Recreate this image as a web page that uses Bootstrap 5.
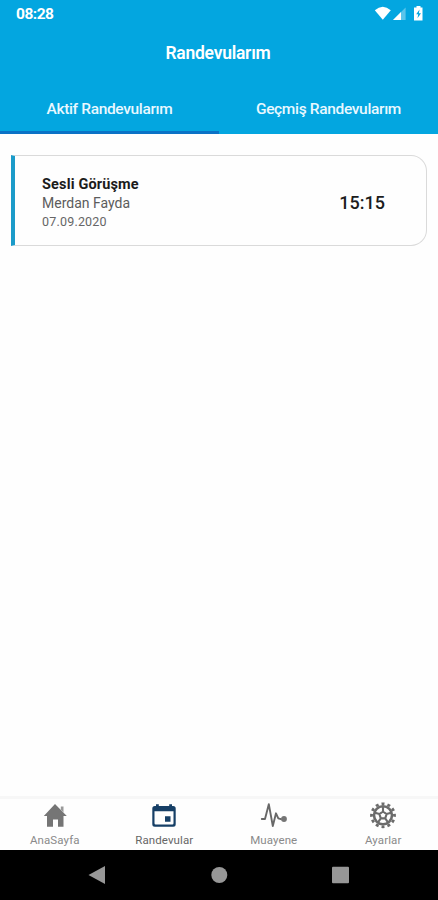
<!DOCTYPE html>
<html lang="tr">
<head>
<meta charset="utf-8">
<meta name="viewport" content="width=device-width, initial-scale=1">
<title>Randevularım</title>
<link href="https://cdn.jsdelivr.net/npm/bootstrap@5.3.0/dist/css/bootstrap.min.css" rel="stylesheet">
<style>
  body { font-family: Roboto, "Liberation Sans", sans-serif; height: 900px; overflow: hidden; background: #fefefe; }
  svg { display: block; flex: none; }
  .app-head { background: #03a6e0; height: 134px; }
  .status-bar { height: 28px; padding: 0 14px 0 16px; }
  .clock { font-size: 15.5px; line-height: 18px; letter-spacing: -.5px; }
  .app-title { font-size: 17.5px; line-height: 20px; height: 56px; padding: 15px 2px 0 0; margin: 0; font-weight: 600; letter-spacing: -.25px; }
  .app-tabs { height: 50px; }
  .app-tabs .nav-link { color: #e9f8ff; font-size: 15.5px; letter-spacing: -.34px; line-height: 20px; padding: 15px 0 0; border-bottom: 3px solid transparent; font-weight: 500; }
  .app-tabs .nav-link.active { border-bottom-color: #0b72c6; }
  .visit { margin: 21px 11px 0; height: 91px; border: 1px solid #dadada; border-left: 4px solid #1b9bc9; border-radius: 0 16px 16px 0; padding: 4px 41px 0 27px; background: #fefefe; }
  .visit-kind { font-size: 14.5px; letter-spacing: .15px; line-height: 19px; color: #1b1b1b; font-weight: 700; }
  .visit-name { font-size: 14px; line-height: 19px; color: #5c5c5c; }
  .visit-date { font-size: 12.5px; letter-spacing: .2px; line-height: 18px; color: #666; }
  .visit-time { font-size: 18px; line-height: 22px; color: #1c1c1c; font-weight: 500; }
  .app-nav { height: 54px; border-top: 3px solid #f7f7f7; background: #fefefe; }
  .app-nav .nav-link { padding: 2px 0 0; color: #8a8a8a; font-size: 11.5px; letter-spacing: .1px; line-height: 14px; }
  .app-nav .nav-link.active { color: #666; }
  .app-nav span { margin-top: 4px; }
  .sys-nav { height: 50px; background: #000; padding: 0 88px; }
</style>
</head>
<body class="d-flex flex-column">
<header class="app-head d-flex flex-column flex-shrink-0 text-white">
  <div class="status-bar d-flex justify-content-between align-items-center">
    <span class="clock fw-bold">08:28</span>
    <svg width="50" height="16" viewBox="0 0 50 16" fill="#fff">
      <path d="M.8 4.2Q8.7-2.8 16.8 4.2L8.800 13.800z"/>
      <path d="M19 13.900L31.600 1.500v12.400z" fill-opacity=".35"/>
      <path d="M19 13.900L27 6v7.900z"/>
      <path d="M42.500 0h4v1.600h2v12.800h-8.500V1.600h2.500z"/>
      <path d="M45.500 3.600l-3.300 4.700h2l-.7 4 3.500-5h-2.100z" fill="#03a6e0"/>
    </svg>
  </div>
  <h1 class="app-title text-center">Randevularım</h1>
  <nav class="app-tabs nav nav-fill">
    <a class="nav-link active w-50" href="#">Aktif Randevularım</a>
    <a class="nav-link w-50" href="#">Geçmiş Randevularım</a>
  </nav>
</header>
<main class="flex-grow-1">
  <div class="visit d-flex justify-content-between align-items-center">
    <div>
      <div class="visit-kind">Sesli Görüşme</div>
      <div class="visit-name">Merdan Fayda</div>
      <div class="visit-date">07.09.2020</div>
    </div>
    <div class="visit-time">15:15</div>
  </div>
</main>
<nav class="app-nav nav nav-fill flex-shrink-0">
  <a class="nav-link w-25 d-flex flex-column align-items-center" href="#">
    <svg width="28" height="28" viewBox="0 0 28 28"><path d="M14 3L25.800 15H22.500v10.700h-5.500V18.500h-5v7.200H6V15H2.800L14 3z" fill="#757575"/><path d="M19.800 5.500h2.700v6l-2.700-2.700z" fill="#999"/></svg>
    <span>AnaSayfa</span>
  </a>
  <a class="nav-link active w-25 d-flex flex-column align-items-center" href="#">
    <svg width="28" height="28" viewBox="0 0 28 28"><path fill="#163f66" fill-rule="evenodd" d="M6 3.200h2.800V5h10.400V3.200H22V5h1.200a2.500 2.500 0 0 1 2.500 2.500v15.700a2.500 2.500 0 0 1-2.500 2.500H4.800a2.500 2.500 0 0 1-2.500-2.500V7.500A2.500 2.500 0 0 1 4.800 5H6zM4.500 10.200v12.100q0 1.200 1.200 1.200h16.600q1.200 0 1.200-1.200V10.200zM15 15.300h5.500v5.500H15z"/></svg>
    <span>Randevular</span>
  </a>
  <a class="nav-link w-25 d-flex flex-column align-items-center" href="#">
    <svg width="28" height="28" viewBox="0 0 28 28" fill="none" stroke="#686868" stroke-width="1.900" stroke-linejoin="round" stroke-linecap="round"><path d="M1.800 18H5L8.800 3.200 12.800 25 16 12.300 18.300 17.300 21 18.200"/><circle cx="24" cy="18" r="2.900" fill="#757575" stroke="none"/></svg>
    <span>Muayene</span>
  </a>
  <a class="nav-link w-25 d-flex flex-column align-items-center" href="#">
    <svg width="28" height="28" viewBox="0 0 28 28" fill="none" stroke="#6b6b6b"><circle cx="14" cy="14.300" r="9" stroke-width="2.600"/><circle cx="14" cy="14.300" r="11.500" stroke-width="2.800" pathLength="120" stroke-dasharray="5 5" stroke-dashoffset="2.500"/><path stroke-width="2.100" d="M14 10.500l3.600 2.600-1.400 4.300h-4.400l-1.400-4.300zM14 10.500V5.800M17.600 13.100l4.500-1.400M16.200 17.400l2.800 3.900M11.800 17.400L9 21.300M10.400 13.100l-4.500-1.400"/></svg>
    <span>Ayarlar</span>
  </a>
</nav>
<footer class="sys-nav d-flex flex-shrink-0 justify-content-between align-items-center">
  <svg width="18" height="20" viewBox="0 0 18 20"><path d="M.5 10L17 1v18z" fill="#979797"/></svg>
  <svg width="18" height="18" viewBox="0 0 18 18"><circle cx="9.300" cy="9" r="8" fill="#979797"/></svg>
  <svg width="18" height="18" viewBox="0 0 18 18"><rect x="0" y=".7" width="17" height="16.500" rx="1" fill="#979797"/></svg>
</footer>
<script src="https://cdn.jsdelivr.net/npm/bootstrap@5.3.0/dist/js/bootstrap.bundle.min.js"></script>
</body>
</html>
